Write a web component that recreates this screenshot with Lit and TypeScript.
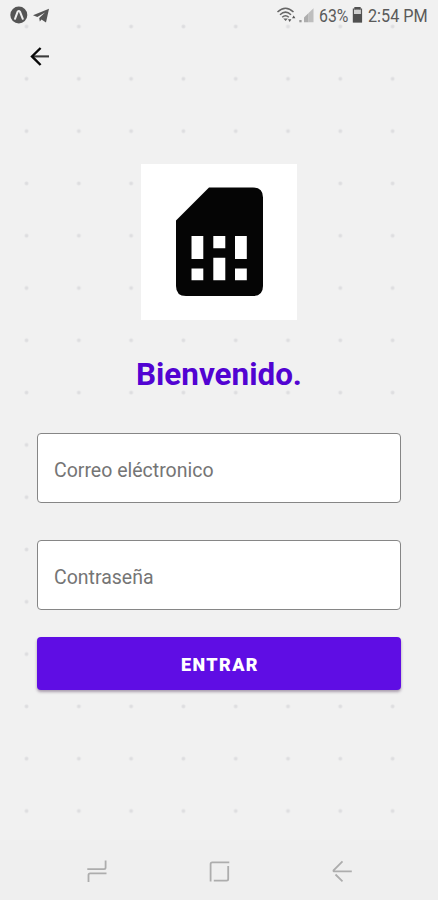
import { LitElement, html, css } from "lit";
import { customElement } from "lit/decorators.js";

@customElement("app-root")
export class AppRoot extends LitElement {
  static styles = css`
    :host {
      display: flex;
      flex-direction: column;
      height: 900px;
      width: 100%;
      overflow: hidden;
      font-family: Roboto, "Liberation Sans", sans-serif;
      background-color: #f1f1f1;
      background-image: radial-gradient(circle, #dcdcde 0, #dfdfe1 1.2px, transparent 2.5px);
      background-size: 52.3px 52.3px;
      background-position: 0.4px 0.4px;
    }
    svg { display: block; }
    .status {
      display: flex;
      justify-content: space-between;
      height: 32px;
      color: #5a5a5a;
      font-size: 18px;
      line-height: 31px;
    }
    .status-right { display: flex; padding-right: 10px; }
    .percent { width: 30px; margin-left: 4px; }
    .clock { width: 60px; margin-left: 3px; white-space: nowrap; }
    .text { display: block; transform-origin: left center; white-space: nowrap; }
    .percent .text { transform: scaleX(0.88); }
    .clock .text { transform: scaleX(0.9); }
    .back {
      width: 48px;
      height: 48px;
      margin-left: 15px;
      padding: 0;
      border: 0;
      background: none;
    }
    main {
      display: flex;
      flex: 1;
      flex-direction: column;
      padding: 84px 37px 0;
    }
    .logo { align-self: center; width: 156px; height: 156px; background: #fff; }
    h1 {
      margin: 35px 0 0;
      height: 38px;
      line-height: 39px;
      text-align: center;
      font-size: 31.4px;
      font-weight: 700;
      color: #5203d2;
      white-space: nowrap;
    }
    .field {
      box-sizing: border-box;
      width: 100%;
      height: 70px;
      margin: 40px 0 0;
      padding: 4px 16px 0;
      border: 1px solid #868686;
      border-radius: 4px;
      background: #fff;
      font: 400 19.5px Roboto, "Liberation Sans", sans-serif;
      outline: none;
    }
    .field + .field { margin-top: 37px; }
    .field::placeholder { color: #757575; opacity: 1; }
    .submit {
      height: 53px;
      margin: 27px 0 0;
      padding: 2px 0 0 2px;
      border: 0;
      border-radius: 4px;
      background: #5f0de4;
      color: #fff;
      font: 900 18px Roboto, "Liberation Sans", sans-serif;
      letter-spacing: 1.4px;
      box-shadow: 0 2px 3px rgba(60, 30, 70, 0.4);
    }
    nav {
      display: flex;
      height: 60px;
      background: #efefef;
    }
  `;

  render() {
    return html`
      <div class="status">
        <svg width="60" height="32" viewBox="0 0 60 32">
          <circle cx="18.8" cy="15" r="8.5" fill="#555" />
          <path d="M15 18.8 17.6 11.8Q18.8 10 20 11.8L22.8 18.8" fill="none" stroke="#eee" stroke-width="2" stroke-linecap="round" />
          <path d="M33 15.2 49 8.7 46 22.4 41.5 19.6 39.8 21.4 39.2 18 45 12.5 37.3 17Z" fill="#555" />
        </svg>
        <div class="status-right">
          <svg width="39" height="32" viewBox="276 0 39 32">
            <g fill="none" stroke="#666" stroke-width="1.5">
              <path d="M277.5 12Q285.5 4.5 293.5 12" />
              <path d="M280 14.7Q285.5 9.5 291 14.7" />
              <path d="M282.2 17.3Q285.5 14 288.8 17.3" />
            </g>
            <path d="M283.3 18.4H287.8L285.6 21Z" fill="#666" />
            <path d="M288 19.2H291.4L289.7 22ZM292 18.2H295.4L293.7 15.6Z" fill="#555" />
            <rect x="299.3" y="20" width="2.3" height="2.3" fill="#999" />
            <path d="M304 22.3V17.6L308.6 13V22.3Z" fill="#adadad" />
            <path d="M308.6 22.3V13L313.5 8.3V22.3Z" fill="#bebebe" />
          </svg>
          <div class="percent"><span class="text">63%</span></div>
          <svg width="16" height="32" viewBox="350 0 16 32">
            <path d="M356 7.5H361V9H362.5V22H354.4V9H356Z" fill="#d0d0d0" stroke="#555" stroke-width="1.2" />
            <path d="M354 14H363V22.3H354Z" fill="#505050" />
            <path d="M355.8 7H361.2V9.6H355.8Z" fill="#505050" />
          </svg>
          <div class="clock"><span class="text">2:54 PM</span></div>
        </div>
      </div>
      <button class="back" aria-label="Atrás">
        <svg width="48" height="48" viewBox="15 32 48 48">
          <path d="M49 56.4H32" fill="none" stroke="#3a3a3a" stroke-width="2.1" />
          <path d="M40.6 48 32 56.4 40.6 65" fill="none" stroke="#080808" stroke-width="2.4" />
        </svg>
      </button>
      <main>
        <div class="logo">
          <svg width="156" height="156" viewBox="141 164 156 156">
            <path
              fill="#050505"
              fill-rule="evenodd"
              d="M209 187.5H253Q263 187.5 263 197.5V286Q263 296 253 296H186Q176 296 176 286V220.5ZM191.5 236V259H203.3V236ZM213.3 236V248.3H225.3V236ZM235 236V259H246.8V236ZM191.5 268.5V280.3H203.3V268.5ZM213.3 257.8V280.3H225.3V257.8ZM235 268.5V280.3H246.8V268.5Z"
            />
          </svg>
        </div>
        <h1>Bienvenido.</h1>
        <input class="field" type="email" placeholder="Correo eléctronico" />
        <input class="field" type="password" placeholder="Contraseña" />
        <button class="submit">ENTRAR</button>
      </main>
      <nav>
        <svg width="438" height="60" viewBox="0 840 438 60">
          <g fill="none" stroke="#adadad" stroke-width="1.8">
            <path d="M87.3 869.2H104Q105.6 869.2 105.6 867.6V860.5M106.5 873.3H90.2Q88.5 873.3 88.5 875V882" />
            <path d="M229.3 862.3H212.3Q210.6 862.3 210.6 864V881.5M228.2 866V879Q228.2 880.6 226.6 880.6H213.8" />
            <path d="M342.5 861.3 333.6 870.3Q333 871.3 334.5 871.3H351.8M335.5 874.5 342.5 881.3" />
          </g>
        </svg>
      </nav>
    `;
  }
}
